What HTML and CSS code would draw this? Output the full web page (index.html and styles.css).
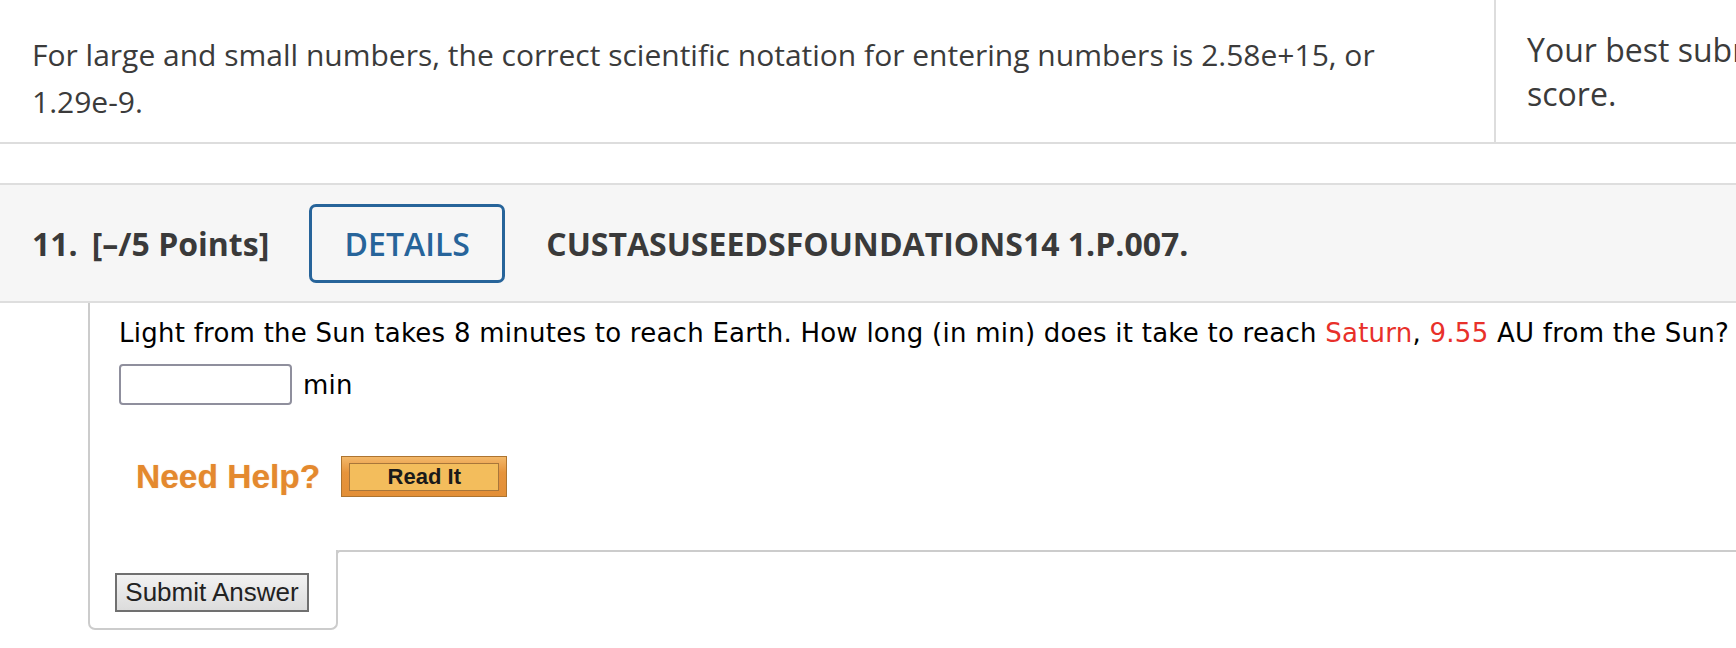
FILE: index.html
```html
<!DOCTYPE html>
<html>
<head>
<meta charset="utf-8">
<link rel="stylesheet" href="styles.css">
</head>
<body>
<div class="page">
  <div class="top">
    <div class="top-left">For large and small numbers, the correct scientific notation for entering numbers is 2.58e+15, or 1.29e-9.</div>
    <div class="top-right">Your best submission for each question part is used for your<br>score.</div>
  </div>

  <div class="qhead">
    <span class="qnum">11.</span>
    <span class="qpts">[&ndash;/5 Points]</span>
    <span class="details">DETAILS</span>
    <span class="qid">CUSTASUSEEDSFOUNDATIONS14 1.P.007.</span>
  </div>

  <div class="qcontent">
    <div class="qtext">Light from the Sun takes 8 minutes to reach Earth. How long (in min) does it take to reach <span class="red">Saturn</span>, <span class="red">9.55</span> AU from the Sun?</div>
    <div class="answer">
      <input class="ans-input" type="text">
      <span class="unit">min</span>
    </div>
    <div class="help">
      <span class="need-help">Need Help?</span>
      <span class="read-it"><span class="read-it-inner">Read It</span></span>
    </div>
  </div>

  <div class="qfoot">
    <div class="tab"><button class="submit">Submit Answer</button></div>
    <div class="rest"></div>
  </div>
</div>
</body>
</html>
```

FILE: styles.css
```css
html, body {
  margin: 0;
  padding: 0;
  background: #fff;
  overflow: hidden;
}
.page {
  width: 1736px;
  height: 648px;
  overflow: hidden;
}
.top {
  display: flex;
  height: 142px;
  border-bottom: 2px solid #dddddd;
  font-family: "Open Sans", sans-serif;
  color: #3b3b3b;
}
.top-left {
  width: 1430px;
  flex: none;
  padding: 31px 32px 0 32px;
  font-size: 30px;
  line-height: 47px;
  border-right: 2px solid #dddddd;
}
.top-right {
  flex: none;
  padding: 28px 0 0 31px;
  font-size: 32px;
  line-height: 44px;
  white-space: nowrap;
}
.qhead {
  margin-top: 39px;
  height: 116px;
  background: #f6f6f6;
  border-top: 2px solid #dedede;
  border-bottom: 2px solid #dedede;
  display: flex;
  align-items: center;
  padding-left: 32px;
  font-family: "Open Sans", sans-serif;
  font-weight: 700;
  font-size: 32px;
  color: #3a3a3a;
  white-space: nowrap;
}
.qnum {
  margin-right: 14px;
}
.details {
  margin-left: 40px;
  margin-right: 41px;
  box-sizing: border-box;
  width: 196px;
  height: 79px;
  border: 3px solid #27649a;
  border-radius: 7px;
  display: flex;
  align-items: center;
  justify-content: center;
  color: #27649a;
  font-weight: 600;
}
.qcontent {
  margin-left: 88px;
  border-left: 2px solid #cccccc;
  padding: 15px 0 53px 29px;
  font-family: "DejaVu Sans", Verdana, sans-serif;
  font-size: 26px;
  letter-spacing: 0.25px;
  color: #000;
  white-space: nowrap;
}
.red {
  color: #e8302a;
}
.answer {
  margin-top: 16px;
  display: flex;
  align-items: center;
}
.ans-input {
  box-sizing: border-box;
  width: 173px;
  height: 41px;
  border: 2px solid #8f8f9d;
  border-radius: 4px;
  margin: 0 11px 0 0;
  padding: 0;
  background: #fff;
}
.help {
  margin-top: 51px;
  display: flex;
  align-items: center;
  padding-left: 17px;
  letter-spacing: 0;
}
.need-help {
  font-family: "Liberation Sans", Arial, sans-serif;
  font-weight: 700;
  font-size: 33.5px;
  color: #e4892e;
  margin-right: 21px;
  text-shadow: 0 0 1px rgba(228, 137, 46, 0.5);
}
.read-it {
  box-sizing: border-box;
  width: 166px;
  height: 41px;
  border: 1px solid #ad7430;
  background: linear-gradient(#f3b86a, #e6943c 40%, #e38f37);
  display: flex;
  padding: 6px 7px 5px 7px;
}
.read-it-inner {
  flex: 1;
  border: 1px solid #a8763a;
  background: #f3bd5c;
  display: flex;
  align-items: center;
  justify-content: center;
  font-family: "Liberation Sans", Arial, sans-serif;
  font-weight: 700;
  font-size: 22px;
  color: #1a1a1a;
}
.qfoot {
  display: flex;
  height: 80px;
}
.tab {
  margin-left: 88px;
  width: 250px;
  flex: none;
  box-sizing: border-box;
  border: 2px solid #cccccc;
  border-top: none;
  border-radius: 0 0 7px 7px;
  padding: 23px 0 0 25px;
}
.rest {
  flex: 1;
  border-top: 2px solid #cccccc;
  margin-left: -2px;
  border-top-left-radius: 4px;
  border-left: 2px solid #cccccc;
  height: 40px;
}
.submit {
  box-sizing: border-box;
  width: 194px;
  height: 39px;
  border: 2px solid #707070;
  border-radius: 0;
  background: linear-gradient(#f2f2f2, #dcdcdc);
  font-family: "Liberation Sans", Arial, sans-serif;
  font-size: 26px;
  color: #222;
  padding: 0;
  margin: 0;
}
```
